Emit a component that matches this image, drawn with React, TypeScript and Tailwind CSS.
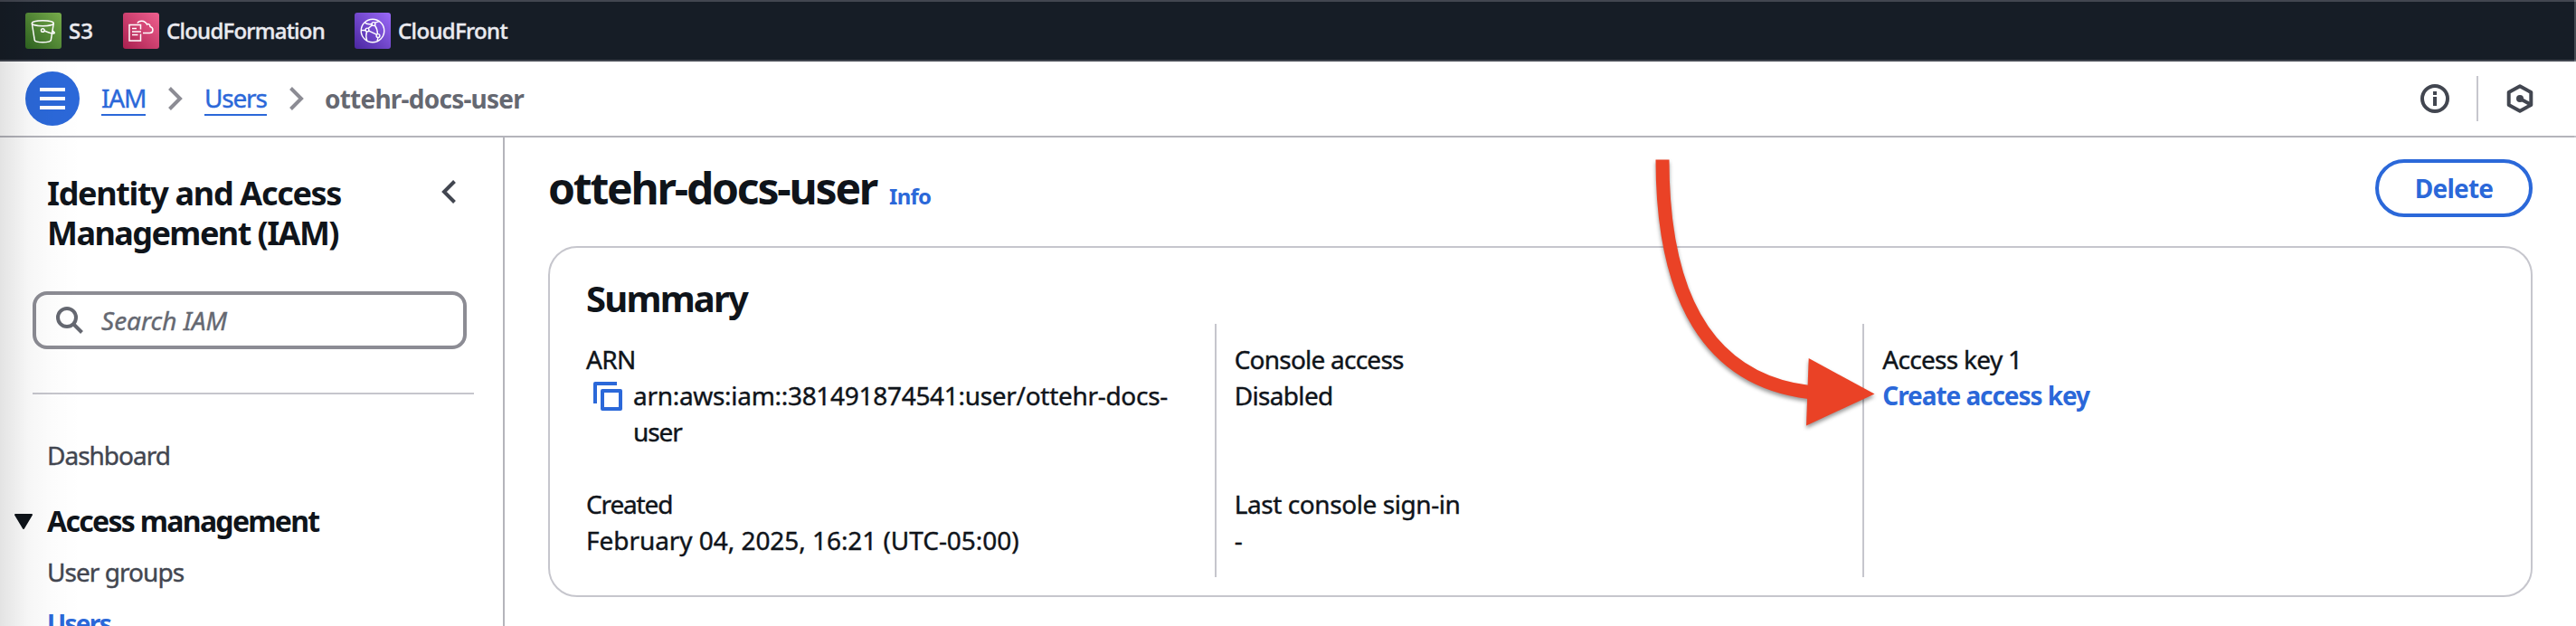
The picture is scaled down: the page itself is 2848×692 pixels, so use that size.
import { ReactNode } from "react";

const CopyIcon = () => (
  <svg width="32" height="32" viewBox="0 0 16 16" fill="none" stroke="#2b68d9" strokeWidth="2" strokeLinejoin="round">
    <path d="M5 5h10v10H5z" />
    <path d="M13 1H1v11" />
  </svg>
);

const ChevronRight = () => (
  <svg width="16" height="26" viewBox="0 0 16 26" fill="none" stroke="#8c8c94" strokeWidth="4">
    <path d="M1.5 1.5 13 13 1.5 24.5" />
  </svg>
);

const S3Icon = () => (
  <svg className="rounded-[3px]" width="40" height="40" viewBox="0 0 40 40" fill="none" stroke="#fff" strokeWidth="1.5">
    <defs>
      <linearGradient id="s3" x1="0" y1="1" x2="1" y2="0">
        <stop offset="0" stopColor="#2e6420" />
        <stop offset="1" stopColor="#78ad4c" />
      </linearGradient>
    </defs>
    <rect width="40" height="40" fill="url(#s3)" stroke="none" />
    <ellipse cx="19.3" cy="11.7" rx="12" ry="3" />
    <path d="M7.3 11.7 10.3 30.5c1 3 17 3 18 0L31.3 11.7" />
    <path d="M21 20c4 1.8 8 3.2 10.5 2.9 1.7-.3.5-1.5-2-2.9" />
    <circle cx="19.3" cy="19.5" r="1.8" />
  </svg>
);

const CloudFormationIcon = () => (
  <svg className="rounded-[3px]" width="40" height="40" viewBox="0 0 40 40" fill="none" stroke="#fff" strokeWidth="1.5">
    <defs>
      <linearGradient id="cfn" x1="0" y1="1" x2="1" y2="0">
        <stop offset="0" stopColor="#a9204f" />
        <stop offset="1" stopColor="#f0608f" />
      </linearGradient>
    </defs>
    <rect width="40" height="40" fill="url(#cfn)" stroke="none" />
    <path d="M19.5 18.5v-5H7V31h12.5v-7.500" />
    <path d="M10 17.500h5M10 21h10M10 24.500h6.500" />
    <path d="M16 11.500c1.500-3 8-3.500 10.500 1.500 1.500-1.200 3.500 0 3.500 2.500 4 1 4 7-.5 7H22" />
  </svg>
);

const CloudFrontIcon = () => (
  <svg className="rounded-[3px]" width="40" height="40" viewBox="0 0 40 40" fill="none" stroke="#fff" strokeWidth="1.4">
    <defs>
      <linearGradient id="cf" x1="0" y1="1" x2="1" y2="0">
        <stop offset="0" stopColor="#4a27a0" />
        <stop offset="1" stopColor="#9b69f8" />
      </linearGradient>
    </defs>
    <rect width="40" height="40" fill="url(#cf)" stroke="none" />
    <circle cx="20" cy="20" r="12.8" />
    <circle cx="21" cy="12.5" r="1.9" />
    <circle cx="14" cy="19" r="1.9" />
    <circle cx="26" cy="25.5" r="1.9" />
    <path d="M7.2 19.500H12M15.800 20.200l8.500 4M22.400 14c2.200 3 3 6 3 9.500M19.200 12.500c-3.700.5-6.500 0-7.700-1.500M22.500 11.200l4.500-1.500M13.500 21c-1 3-1 6 .2 10M15.200 17.400l4.300-3.600M26 27.500l-1 4" />
  </svg>
);

const services: { name: string; icon: ReactNode; label: string }[] = [
  { name: "S3", icon: <S3Icon />, label: "w-[28px]" },
  { name: "CloudFormation", icon: <CloudFormationIcon />, label: "w-[176px] tracking-[-0.76px]" },
  { name: "CloudFront", icon: <CloudFrontIcon />, label: "w-[122px] tracking-[-0.66px]" },
];

const TopBar = () => (
  <header className="flex h-[68px] shrink-0 items-center gap-8 border-y-2 border-[#424650] bg-[#161d26] pl-7">
    {services.map((s) => (
      <div key={s.name} className="flex items-center gap-2">
        {s.icon}
        <span className={`text-[24px] leading-[40px] font-medium whitespace-nowrap text-[#ebebf0] [-webkit-text-stroke:0.4px] ${s.label}`}>
          {s.name}
        </span>
      </div>
    ))}
  </header>
);

const Breadcrumbs = () => (
  <div className="flex h-[84px] shrink-0 items-center justify-between border-b-2 border-[#b4b4bb] pr-[46px] pl-7">
    <div className="flex items-center">
      <button className="flex size-[60px] items-center justify-center rounded-full bg-[#2b68d9]">
        <svg width="28" height="24" viewBox="0 0 28 24" stroke="#fff" strokeWidth="4">
          <path d="M0 2h28M0 12h28M0 22h28" />
        </svg>
      </button>
      <nav className="ml-6 flex items-center text-[28px] leading-[36px]">
        <a className="h-[38px] w-[49px] border-b-2 border-[#2b68d9] tracking-[-1.2px] text-[#2b68d9] [-webkit-text-stroke:0.4px]">IAM</a>
        <span className="mr-6 ml-[25px]"><ChevronRight /></span>
        <a className="h-[38px] w-[69px] border-b-2 border-[#2b68d9] tracking-[-1.2px] text-[#2b68d9] [-webkit-text-stroke:0.4px]">Users</a>
        <span className="mr-[23px] ml-[25px]"><ChevronRight /></span>
        <span className="font-bold tracking-[-0.77px] text-[#656871]">ottehr-docs-user</span>
      </nav>
    </div>
    <div className="flex items-center">
      <svg width="32" height="32" viewBox="0 0 32 32">
        <circle cx="16" cy="16" r="14" fill="none" stroke="#424650" strokeWidth="4" />
        <path d="M14 8h4v4h-4zM14 14h4v10h-4z" fill="#424650" />
      </svg>
      <div className="mx-[30px] h-[50px] w-0.5 bg-[#c6c6cd]" />
      <svg width="32" height="32" viewBox="0 0 32 32" fill="none" stroke="#424650" strokeWidth="4">
        <path d="M16 2.300 28.300 9v14L16 29.700 3.700 23V9z" strokeLinejoin="round" />
        <path d="m16 16 11 6" />
        <circle cx="16" cy="16" r="4" fill="#424650" stroke="none" />
      </svg>
    </div>
  </div>
);

const Sidebar = () => (
  <aside className="flex w-[558px] shrink-0 flex-col border-r-2 border-[#b4b4bb] text-[28px] leading-[40px]">
    <div className="flex shrink-0 justify-between pt-10 pr-[52px] pl-[52px]">
      <h2 className="text-[36px] leading-[44px] font-bold whitespace-nowrap text-[#0f141a]">
        <span className="block tracking-[-1.33px]">Identity and Access</span>
        <span className="block tracking-[-1.56px]">Management (IAM)</span>
      </h2>
      <svg className="mt-[7px]" width="16" height="26" viewBox="0 0 16 26" fill="none" stroke="#424650" strokeWidth="4">
        <path d="M14.500 1.500 3 13l11.500 11.500" />
      </svg>
    </div>
    <div className="mt-[42px] ml-9 flex h-16 w-[480px] shrink-0 items-center rounded-[16px] border-4 border-[#8c8c94] pl-[22px]">
      <svg width="30" height="30" viewBox="0 0 30 30" fill="none" stroke="#656871" strokeWidth="4">
        <circle cx="12" cy="12" r="10" />
        <path d="m18.500 18.500 10 10" />
      </svg>
      <span className="ml-5 text-[#656871] italic [-webkit-text-stroke:0.4px]">Search IAM</span>
    </div>
    <div className="mt-12 mr-8 ml-9 h-0.5 shrink-0 bg-[#c6c6cd]" />
    <div className="pt-[47px] pl-[52px] text-[#424650]">
      <p className="tracking-[-1px] [-webkit-text-stroke:0.4px]">Dashboard</p>
      <div className="mt-[33px] -ml-9 flex h-10 items-center">
        <svg width="20" height="17" viewBox="0 0 20 17" fill="#0f141a" stroke="#0f141a" strokeWidth="2" strokeLinejoin="round">
          <path d="M1 1h18L10 16z" />
        </svg>
        <span className="ml-4 text-[32px] font-bold tracking-[-1.7px] text-[#0f141a]">Access management</span>
      </div>
      <p className="mt-4 tracking-[-0.95px] [-webkit-text-stroke:0.4px]">User groups</p>
      <p className="mt-[17px] font-bold tracking-[-1.7px] text-[#2b68d9]">Users</p>
    </div>
  </aside>
);

const Field = ({ label, labelClass, children }: { label: string; labelClass: string; children: ReactNode }) => (
  <div className="whitespace-nowrap [-webkit-text-stroke:0.4px]">
    <p className={labelClass}>{label}</p>
    {children}
  </div>
);

const Summary = () => (
  <section className="mt-8 h-[388px] rounded-[32px] border-2 border-[#c6c6cd] px-10 pt-8">
    <h2 className="text-[40px] leading-[48px] font-bold tracking-[-1.8px]">Summary</h2>
    <div className="mt-1 grid h-[280px] grid-cols-3 gap-x-10 text-[28px] leading-[40px]">
      <div className="flex flex-col gap-10 pt-[19px]">
        <Field label="ARN" labelClass="tracking-[-0.6px]">
          <div className="flex">
            <span className="mt-[5px] mr-3 ml-2"><CopyIcon /></span>
            <div>
              <p className="tracking-[-0.3px]">arn:aws:iam::381491874541:user/ottehr-docs-</p>
              <p className="tracking-[-1.1px]">user</p>
            </div>
          </div>
        </Field>
        <Field label="Created" labelClass="tracking-[-1.15px]">
          <p className="tracking-[-0.05px]">February 04, 2025, 16:21 (UTC-05:00)</p>
        </Field>
      </div>
      <div className="-ml-[22px] flex flex-col gap-20 border-l-2 border-[#c6c6cd] pt-[19px] pl-5">
        <Field label="Console access" labelClass="tracking-[-0.77px]">
          <p className="tracking-[-0.66px]">Disabled</p>
        </Field>
        <Field label="Last console sign-in" labelClass="tracking-[-0.42px]">
          <p>-</p>
        </Field>
      </div>
      <div className="-ml-[22px] border-l-2 border-[#c6c6cd] pt-[19px] pl-5">
        <Field label="Access key 1" labelClass="tracking-[-0.7px]">
          <a className="font-bold tracking-[-1.07px] text-[#2b68d9] [-webkit-text-stroke:0px]">Create access key</a>
        </Field>
      </div>
    </div>
  </section>
);

const Arrow = () => (
  <svg
    className="pointer-events-none absolute top-[160px] left-[1800px] drop-shadow-[0_3px_2px_rgba(0,0,0,0.4)]"
    width="300"
    height="330"
    viewBox="1800 160 300 330"
  >
    <path d="M1838 176.500C1838 330 1890 420 2000 433.500" fill="none" stroke="#ea4226" strokeWidth="15" />
    <path d="M1999.700 396 2072.500 435.500 1997 470.500z" fill="#ea4226" />
  </svg>
);

export default function App() {
  return (
    <div className="relative flex h-[692px] w-[2848px] flex-col overflow-hidden bg-white font-['Noto_Sans',sans-serif] text-[#0f141a]">
      <TopBar />
      <Breadcrumbs />
      <div className="flex min-h-0 flex-1">
        <Sidebar />
        <main className="flex-1 pt-6 pr-12 pl-12">
          <div className="flex h-16 justify-between">
            <div className="flex items-baseline gap-[14px]">
              <h1 className="text-[48px] leading-[64px] font-bold tracking-[-2.2px]">ottehr-docs-user</h1>
              <a className="text-[24px] font-bold tracking-[-0.8px] text-[#2b68d9]">Info</a>
            </div>
            <button className="h-16 w-[174px] rounded-full border-4 border-[#2b68d9] text-[28px] leading-[52px] font-bold tracking-[-0.8px] text-[#2b68d9]">
              Delete
            </button>
          </div>
          <Summary />
        </main>
      </div>
      <Arrow />
      {/* window edge shade */}
      <div className="pointer-events-none absolute inset-y-0 left-0 w-[90px] bg-[linear-gradient(to_right,rgba(0,0,0,0.11),rgba(0,0,0,0.035)_35%,rgba(0,0,0,0.01)_65%,transparent)]" />
      <div className="pointer-events-none absolute inset-y-0 right-0 w-0.5 bg-white/20" />
    </div>
  );
}
